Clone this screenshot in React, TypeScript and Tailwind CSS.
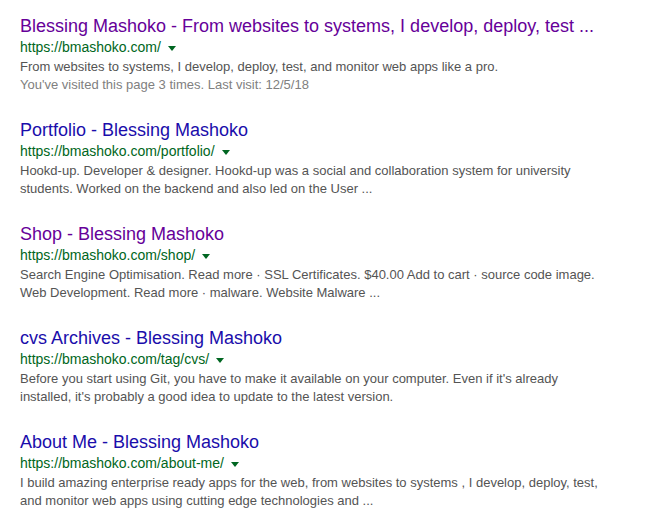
import React from 'react';

interface IResultProps {
  title: string;
  url: string;
  lines: string[];
  visited?: boolean;
  visitNote?: string;
}

const results: IResultProps[] = [
  {
    title: 'Blessing Mashoko - From websites to systems, I develop, deploy, test ...',
    url: 'https://bmashoko.com/',
    lines: ['From websites to systems, I develop, deploy, test, and monitor web apps like a pro.'],
    visited: true,
    visitNote: "You've visited this page 3 times. Last visit: 12/5/18",
  },
  {
    title: 'Portfolio - Blessing Mashoko',
    url: 'https://bmashoko.com/portfolio/',
    lines: [
      'Hookd-up. Developer & designer. Hookd-up was a social and collaboration system for university',
      'students. Worked on the backend and also led on the User ...',
    ],
  },
  {
    title: 'Shop - Blessing Mashoko',
    url: 'https://bmashoko.com/shop/',
    lines: [
      'Search Engine Optimisation. Read more · SSL Certificates. $40.00 Add to cart · source code image.',
      'Web Development. Read more · malware. Website Malware ...',
    ],
    visited: true,
  },
  {
    title: 'cvs Archives - Blessing Mashoko',
    url: 'https://bmashoko.com/tag/cvs/',
    lines: [
      "Before you start using Git, you have to make it available on your computer. Even if it's already",
      "installed, it's probably a good idea to update to the latest version.",
    ],
  },
  {
    title: 'About Me - Blessing Mashoko',
    url: 'https://bmashoko.com/about-me/',
    lines: [
      'I build amazing enterprise ready apps for the web, from websites to systems , I develop, deploy, test,',
      'and monitor web apps using cutting edge technologies and ...',
    ],
  },
];

function SearchResult(props: IResultProps) {
  const { title, url, lines, visited, visitNote } = props;

  return (
    <div className="pb-6">
      <h3
        className={`text-[18px] leading-6 font-normal whitespace-nowrap ${
          visited ? 'text-[#660099]' : 'text-[#1a0dab]'
        }`}
      >
        {title}
      </h3>
      <div className="text-[14px] leading-[18px] text-[#006621] whitespace-nowrap">
        {url}
        <span className="inline-block align-middle ml-[7px] w-0 h-0 border-t-[5px] border-x-[4px] border-t-[#006621] border-x-transparent" />
      </div>
      <div className="mt-[2px] text-[13px] leading-[18px] text-[#545454]">
        {lines.map(line => (
          <div key={line} className="whitespace-nowrap">
            {line}
          </div>
        ))}
        {visitNote && <div className="whitespace-nowrap text-[#808080]">{visitNote}</div>}
      </div>
    </div>
  );
}

export default function App() {
  return (
    <div
      className="min-h-screen bg-white pl-5 pt-[14px]"
      style={{ fontFamily: '"Liberation Sans", Arial, sans-serif' }}
    >
      {results.map(r => (
        <SearchResult key={r.url} {...r} />
      ))}
    </div>
  );
}
